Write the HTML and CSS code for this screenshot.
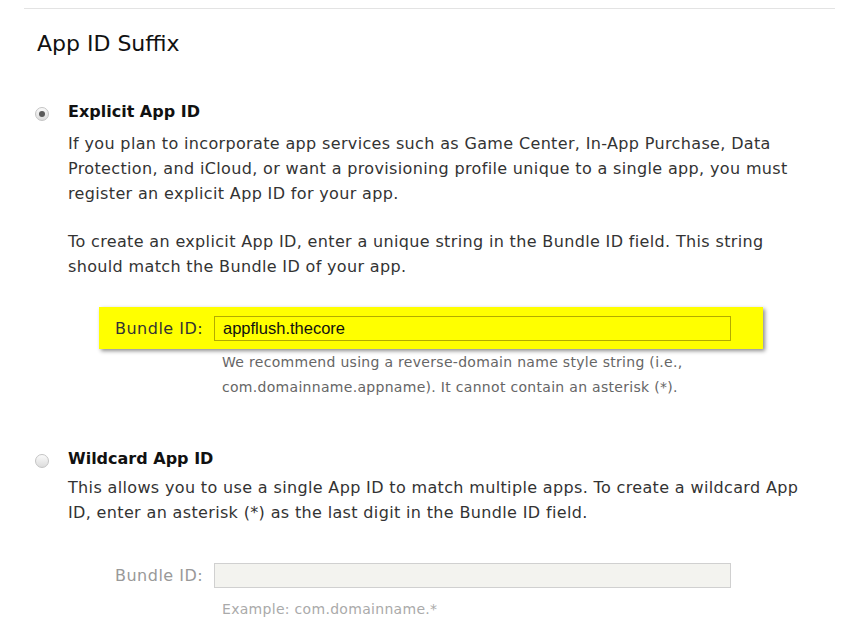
FILE: index.html
```html
<!DOCTYPE html>
<html>
<head>
<meta charset="utf-8">
<link rel="stylesheet" href="styles.css">
</head>
<body>
<div class="page">
  <div class="rule"></div>
  <h2 class="title">App ID Suffix</h2>

  <div class="option">
    <span class="radio checked"></span>
    <div class="option-body">
      <h3 class="option-title">Explicit App ID</h3>
      <p class="desc">If you plan to incorporate app services such as Game Center, In-App Purchase, Data Protection, and iCloud, or want a provisioning profile unique to a single app, you must register an explicit App ID for your app.</p>
      <p class="desc">To create an explicit App ID, enter a unique string in the Bundle ID field. This string should match the Bundle ID of your app.</p>
      <div class="field highlight">
        <label class="field-label">Bundle ID:</label>
        <div class="input">appflush.thecore</div>
      </div>
      <p class="hint">We recommend using a reverse-domain name style string (i.e., com.domainname.appname). It cannot contain an asterisk (*).</p>
    </div>
  </div>

  <div class="option second">
    <span class="radio"></span>
    <div class="option-body">
      <h3 class="option-title">Wildcard App ID</h3>
      <p class="desc tight">This allows you to use a single App ID to match multiple apps. To create a wildcard App ID, enter an asterisk (*) as the last digit in the Bundle ID field.</p>
      <div class="field disabled">
        <label class="field-label">Bundle ID:</label>
        <div class="input"></div>
      </div>
      <p class="hint light">Example: com.domainname.*</p>
    </div>
  </div>
</div>
</body>
</html>
```

FILE: styles.css
```css
html, body {
  margin: 0;
  padding: 0;
  background: #fff;
}
body {
  font-family: "DejaVu Sans", "Liberation Sans", sans-serif;
  color: #333;
}
.page {
  margin: 8px 11px 0 24px;
}
.rule {
  height: 1px;
  background: #e3e3e3;
}
.title {
  margin: 22px 0 0 13px;
  font-size: 22px;
  font-weight: normal;
  color: #111;
  line-height: 26px;
}
.option {
  display: flex;
  margin-top: 44px;
  padding-left: 11px;
}
.option.second {
  margin-top: 48px;
}
.radio {
  flex: none;
  width: 12px;
  height: 12px;
  border-radius: 50%;
  border: 1px solid #c4c4c4;
  background: linear-gradient(#fafafa, #dcdcdc);
  margin-top: 6px;
  margin-right: 19px;
  position: relative;
}
.radio.checked::after {
  content: "";
  position: absolute;
  left: 3px;
  top: 3px;
  width: 6px;
  height: 6px;
  border-radius: 50%;
  background: #5a5a5a;
}
.option-body {
  flex: 1;
  min-width: 0;
}
.option-title {
  margin: 0;
  font-size: 16px;
  font-weight: bold;
  color: #111;
  line-height: 22px;
}
.desc {
  margin: 8px 0 0;
  font-size: 16px;
  letter-spacing: 0.35px;
  line-height: 25px;
  width: 735px;
}
.desc.tight {
  margin-top: 5px;
}
.desc + .desc {
  margin-top: 23px;
}
.field {
  display: flex;
  align-items: center;
  width: 664px;
  height: 42px;
  box-sizing: border-box;
}
.field-label {
  flex: none;
  width: 115px;
  padding-left: 16px;
  box-sizing: border-box;
  font-size: 16px;
  letter-spacing: 0.5px;
}
.input {
  width: 517px;
  height: 25px;
  box-sizing: border-box;
  font-family: "Liberation Sans", Arial, sans-serif;
  font-size: 16.5px;
  line-height: 23px;
  padding-left: 8px;
}
.highlight {
  margin-top: 28px;
  margin-left: 31px;
  background: #ffff00;
  box-shadow: 2px 2px 4px rgba(0, 0, 0, 0.45);
}
.highlight .field-label {
  color: #333;
}
.highlight .input {
  border: 1px solid #b3ab00;
  color: #111;
}
.disabled {
  margin-top: 29px;
  margin-left: 31px;
}
.disabled .field-label {
  color: #999;
}
.disabled .input {
  border: 1px solid #d0d0d0;
  background: #f3f3ef;
}
.hint {
  margin: 1px 0 0 154px;
  width: 480px;
  font-size: 14px;
  letter-spacing: 0.3px;
  line-height: 25px;
  color: #666;
}
.hint.light {
  color: #aaa;
}
```
